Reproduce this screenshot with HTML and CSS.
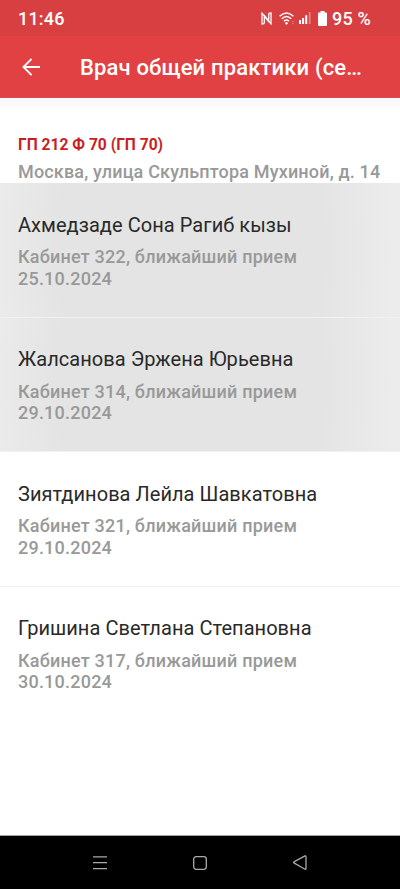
FILE: index.html
```html
<!DOCTYPE html>
<html lang="ru">
<head>
<meta charset="utf-8">
<meta name="viewport" content="width=device-width">
<title>Врач общей практики</title>
<link rel="stylesheet" href="styles.css">
</head>
<body>
<div class="status">
  <span class="time">11:46</span>
  <div class="indicators">
    <svg class="nfc" width="11" height="13" viewBox="0 0 11 13" fill="none" stroke="#fff" stroke-width="1.3"><path d="M3.3 11.6 1 12V1.2L8 10.2M7.7 1.4 10 1V11.8L3 2.8M3.3 4.2V11.6M7.7 1.4V8.8"/></svg>
    <svg class="wifi" width="16" height="13" viewBox="0 0 16 13" fill="none" stroke="#fff" stroke-width="1.5"><path d="M.6 4.3Q7.5-2.3 14.4 4.3M2.8 6.8Q7.5 2.3 12.2 6.8M5 9.2Q7.5 6.8 10 9.2"/><circle cx="7.5" cy="11.2" r="1.2" fill="#fff" stroke="none"/><path d="M13.7 9v1.2m0 .8v1.2" stroke-opacity=".3"/></svg>
    <svg class="signal" width="12" height="12" viewBox="0 0 12 12" fill="#fff"><path d="M0 8h2v4H0zM3.1 6h2v6h-2zM6.2 3.2h2V12h-2z"/><path d="M9.8 0h1.8v12H9.8z" opacity=".35"/></svg>
    <svg class="battery" width="9" height="15" viewBox="0 0 9 15" fill="#fff"><path d="M2.5 0h4v1.4H8q1 0 1 1V14q0 1-1 1H1q-1 0-1-1V2.4q0-1 1-1h1.5z"/></svg>
    <span class="level">95 %</span>
  </div>
</div>
<header class="bar">
  <svg class="back" width="18" height="18" viewBox="0 0 18 18" fill="none" stroke="#fff" stroke-width="1.9"><path d="M18 9H1.5M9.6.9 1.5 9l8.1 8.1"/></svg>
  <h1>Врач общей практики (се…</h1>
</header>
<main>
  <section class="clinic">
    <h2>ГП 212 Ф 70 (ГП 70)</h2>
    <p>Москва, улица Скульптора Мухиной, д. 14</p>
  </section>
  <ul class="doctors">
    <li class="pressed"><h3>Ахмедзаде Сона Рагиб кызы</h3><p>Кабинет 322, ближайший прием<br>25.10.2024</p></li>
    <li class="pressed"><h3>Жалсанова Эржена Юрьевна</h3><p>Кабинет 314, ближайший прием<br>29.10.2024</p></li>
    <li><h3>Зиятдинова Лейла Шавкатовна</h3><p>Кабинет 321, ближайший прием<br>29.10.2024</p></li>
    <li><h3>Гришина Светлана Степановна</h3><p>Кабинет 317, ближайший прием<br>30.10.2024</p></li>
  </ul>
</main>
<nav>
  <svg width="14" height="14" viewBox="0 0 14 14" fill="none" stroke="#aaa" stroke-width="1.2"><path d="M0 .8h14M0 6.7h14M0 12.6h14"/></svg>
  <svg width="14" height="14" viewBox="0 0 14 14" fill="none" stroke="#aaa" stroke-width="1.3"><rect x=".7" y=".7" width="12.6" height="12.6" rx="2.5"/></svg>
  <svg width="14" height="15" viewBox="0 0 14 15" fill="none" stroke="#aaa" stroke-width="1.3" stroke-linejoin="round"><path d="M12 .9.9 6.9q-.6.5 0 1l11.1 6.3q1 .3 1-.8V1.7q0-1.1-1-.8z"/></svg>
</nav>
</body>
</html>
```
FILE: styles.css
```css
* { box-sizing: border-box; }
body {
  margin: 0;
  height: 889px;
  display: flex;
  flex-direction: column;
  overflow: hidden;
  background: #fff;
  font-family: Roboto, sans-serif;
}
h1, h2, h3, p, ul { margin: 0; padding: 0; }
svg { display: block; flex: none; }
.status {
  height: 36px;
  padding: 2px 29px 0 18px;
  display: flex;
  align-items: center;
  justify-content: space-between;
  background: #d83f41;
  color: #fff;
  font-size: 18px;
  font-weight: 500;
  line-height: 34px;
}
.time { letter-spacing: .2px; }
.level { letter-spacing: .2px; margin-left: 5px; }
.indicators { display: flex; align-items: center; }
.nfc, .wifi, .signal, .battery { position: relative; top: -1px; }
.wifi { margin-left: 7px; }
.signal { margin-left: 4px; }
.battery { margin-left: 7px; }
.bar {
  height: 62px;
  padding-left: 22px;
  display: flex;
  align-items: center;
  background: #e24143;
  border-bottom: 1px solid #d94a4b;
  color: #fff;
}
h1 {
  margin-left: 40px;
  padding-top: 2px;
  font-size: 22px;
  font-weight: 500;
  line-height: 28px;
  letter-spacing: .15px;
  white-space: nowrap;
}
main { flex: 1; background: linear-gradient(#f9f9f9 8px, #fff 9px); }
.clinic {
  height: 85.4px;
  padding: 36px 0 0 18px;
  white-space: nowrap;
}
h2 {
  font-size: 15.6px;
  font-weight: 700;
  line-height: 22px;
  color: #c91f23;
}
p {
  font-size: 18px;
  font-weight: 500;
  line-height: 21.6px;
  letter-spacing: .22px;
  color: #999;
}
.clinic p { margin-top: 5px; letter-spacing: .17px; }
.doctors { list-style: none; }
.doctors li {
  height: 134.4px;
  padding: 28.6px 18px 0;
  border-bottom: 1px solid #f1f1f1;
}
.doctors li:last-child { border-bottom: 0; }
.doctors .pressed {
  background: radial-gradient(ellipse 205px 300px at 190px 50%, #e4e4e4 65%, #ececec 100%);
}
h3 {
  font-size: 20px;
  font-weight: 400;
  line-height: 26px;
  letter-spacing: .05px;
  color: #292929;
  white-space: nowrap;
}
.doctors p { margin-top: 8.4px; }
nav {
  height: 54px;
  padding: 0 93px;
  display: flex;
  align-items: center;
  justify-content: space-between;
  background: #000;
  border-top: 1px solid #9aa3a0;
}
```
